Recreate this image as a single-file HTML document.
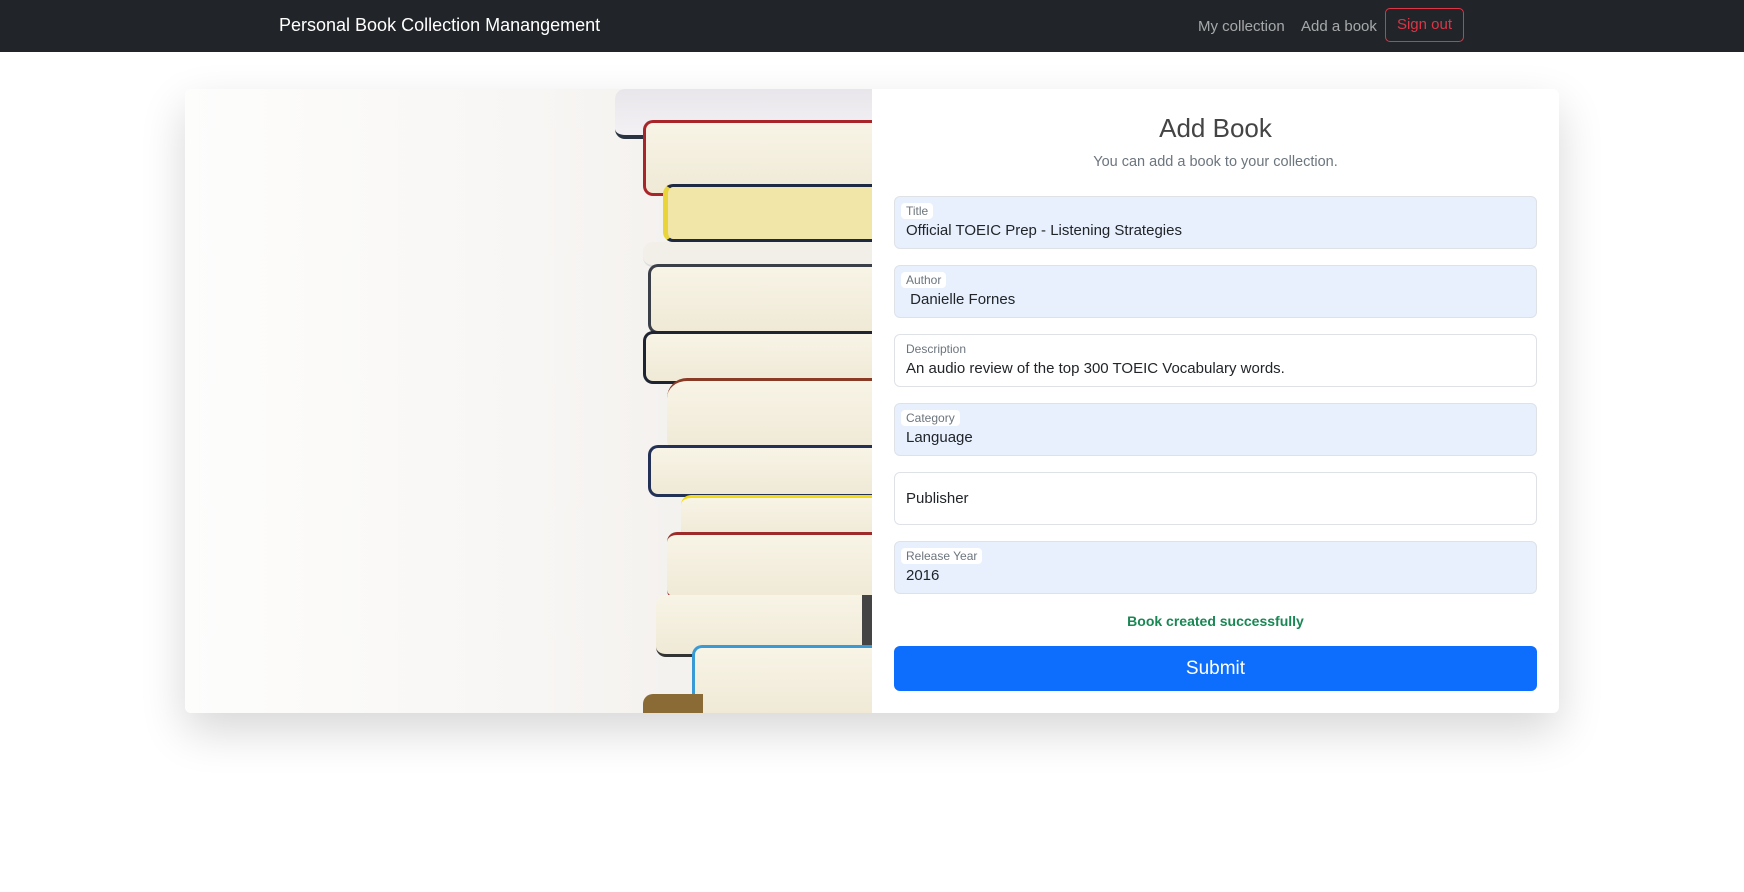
<!DOCTYPE html>
<html><head><meta charset="utf-8"><style>
*{box-sizing:border-box;margin:0;padding:0}
body{width:1744px;height:892px;background:#fff;font-family:"Liberation Sans",sans-serif;position:relative;overflow:hidden}
.nav{position:absolute;left:0;top:0;width:1744px;height:52px;background:#212529}
.brand{position:absolute;left:279px;top:15px;color:#fff;font-size:18px}
.nl{position:absolute;top:18px;color:rgba(255,255,255,.6);font-size:15px}
.so{position:absolute;left:1385px;top:8px;width:79px;height:34px;border:1px solid #dc3545;border-radius:5px;color:#dc3545;font-size:15px;text-align:center;line-height:32px}
.card{position:absolute;left:185px;top:89px;width:1374px;height:624px;background:#fff;border-radius:6px;box-shadow:0 18px 45px rgba(0,0,0,.16);overflow:hidden}
.img{position:absolute;left:0;top:0;width:687px;height:624px;background:linear-gradient(90deg,#fdfdfc 0%,#f8f6f4 50%,#efece8 100%)}
.b{position:absolute;right:0;background:linear-gradient(180deg,#f8f4e6,#efe9d6);border-radius:10px 0 0 10px}
.title{position:absolute;left:872px;width:687px;text-align:center;top:113px;font-size:26px;color:#444}
.sub{position:absolute;left:872px;width:687px;text-align:center;top:154px;font-size:14.5px;color:#6c757d}
.f{position:absolute;left:894px;width:643px;height:53px;border:1px solid #dee2e6;border-radius:6px;background:#e8f0fe}
.f.w{background:#fff}
.f .l{position:absolute;left:6px;top:6px;background:#fff;border-radius:4px;padding:1px 5px;font-size:12px;color:#6c757d}
.f .v{position:absolute;left:11px;top:25px;font-size:15px;color:#212529}
.ok{position:absolute;left:872px;width:687px;text-align:center;top:613px;font-size:14px;font-weight:bold;color:#198754}
.btn{position:absolute;left:894px;top:646px;width:643px;height:45px;background:#0d6efd;border-radius:6px;color:#fff;font-size:19px;text-align:center;line-height:45px}
</style></head><body>
<div class="nav"><div class="brand">Personal Book Collection Manangement</div>
<div class="nl" style="left:1198px">My collection</div><div class="nl" style="left:1301px">Add a book</div>
<div class="so">Sign out</div></div>
<div class="card">
<div class="img">
<div class="b" style="top:0;left:430px;height:50px;border-bottom:4px solid #2a3342;background:linear-gradient(180deg,#e8e6ea,#f3f1f4)"></div>
<div class="b" style="top:31px;left:458px;height:76px;border:3px solid #a8252a;border-right:0"></div>
<div class="b" style="top:95px;left:478px;height:58px;border:3px solid #1e2a44;border-left:5px solid #e9d43a;border-right:0;background:#f1e6a8"></div>
<div class="b" style="top:153px;left:458px;height:25px;background:#f1efe8;border-bottom:2px solid #ddd"></div>
<div class="b" style="top:175px;left:463px;height:70px;border:3px solid #3b3f48;border-right:0"></div>
<div class="b" style="top:242px;left:458px;height:53px;border:3px solid #1f2433;border-right:0"></div>
<div class="b" style="top:289px;left:482px;height:72px;border-top:3px solid #8a3b25;border-radius:20px 0 0 10px"></div>
<div class="b" style="top:356px;left:463px;height:52px;border:3px solid #223155;border-right:0"></div>
<div class="b" style="top:406px;left:496px;height:45px;border-top:3px solid #f3d916;border-bottom:3px solid #f3d916"></div>
<div class="b" style="top:443px;left:482px;height:68px;border-top:3px solid #9e2a2a;border-bottom:3px solid #9e2a2a"></div>
<div class="b" style="top:506px;left:471px;height:62px;border-bottom:3px solid #333;border-right:10px solid #444"></div>
<div class="b" style="top:556px;left:507px;height:72px;border:3px solid #3a9ad6;border-right:0"></div>
<div class="b" style="top:605px;left:458px;width:60px;height:20px;background:#8a6a35;border-radius:10px 0 0 0"></div>
</div>
</div>
<div class="title">Add Book</div>
<div class="sub">You can add a book to your collection.</div>
<div class="f" style="top:196px"><span class="l">Title</span><span class="v">Official TOEIC Prep - Listening Strategies</span></div>
<div class="f" style="top:265px"><span class="l">Author</span><span class="v">&nbsp;Danielle Fornes</span></div>
<div class="f w" style="top:334px"><span class="l">Description</span><span class="v">An audio review of the top 300 TOEIC Vocabulary words.</span></div>
<div class="f" style="top:403px"><span class="l">Category</span><span class="v">Language</span></div>
<div class="f w" style="top:472px"><span class="v" style="top:17px">Publisher</span></div>
<div class="f" style="top:541px"><span class="l">Release Year</span><span class="v">2016</span></div>
<div class="ok">Book created successfully</div>
<div class="btn">Submit</div>
</body></html>
